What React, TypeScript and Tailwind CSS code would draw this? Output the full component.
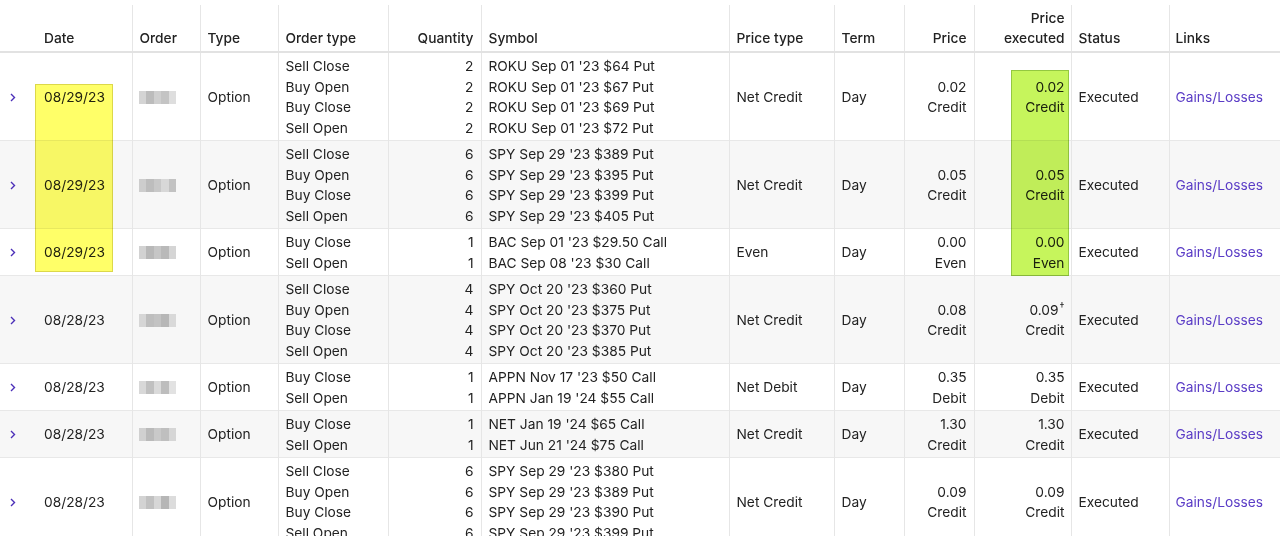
import React from 'react'

type Order = {
  date: string
  legs: { side: string; qty: number; symbol: string }[]
  priceType: string
  price: string
  priceLabel: string
  executed: string
  executedLabel: string
  mark?: boolean
  blur: string[]
}

const legs4 = (qty: number, symbols: string[]) =>
  ['Sell Close', 'Buy Open', 'Buy Close', 'Sell Open'].map((side, i) => ({ side, qty, symbol: symbols[i] }))

const legs2 = (symbols: string[]) =>
  ['Buy Close', 'Sell Open'].map((side, i) => ({ side, qty: 1, symbol: symbols[i] }))

const orders: Order[] = [
  {
    date: '08/29/23',
    legs: legs4(2, ["ROKU Sep 01 '23 $64 Put", "ROKU Sep 01 '23 $67 Put", "ROKU Sep 01 '23 $69 Put", "ROKU Sep 01 '23 $72 Put"]),
    priceType: 'Net Credit',
    price: '0.02',
    priceLabel: 'Credit',
    executed: '0.02',
    executedLabel: 'Credit',
    blur: ['#d4d4d4', '#bcbcbc', '#cfcfcf', '#c4c4c4', '#dedede'],
  },
  {
    date: '08/29/23',
    legs: legs4(6, ["SPY Sep 29 '23 $389 Put", "SPY Sep 29 '23 $395 Put", "SPY Sep 29 '23 $399 Put", "SPY Sep 29 '23 $405 Put"]),
    priceType: 'Net Credit',
    price: '0.05',
    priceLabel: 'Credit',
    executed: '0.05',
    executedLabel: 'Credit',
    blur: ['#cdcdcd', '#bdbdbd', '#c8c8c8', '#d8d8d8', '#c2c2c2'],
  },
  {
    date: '08/29/23',
    legs: legs2(["BAC Sep 01 '23 $29.50 Call", "BAC Sep 08 '23 $30 Call"]),
    priceType: 'Even',
    price: '0.00',
    priceLabel: 'Even',
    executed: '0.00',
    executedLabel: 'Even',
    blur: ['#d2d2d2', '#b8b8b8', '#c6c6c6', '#b9b9b9', '#d5d5d5'],
  },
  {
    date: '08/28/23',
    legs: legs4(4, ["SPY Oct 20 '23 $360 Put", "SPY Oct 20 '23 $375 Put", "SPY Oct 20 '23 $370 Put", "SPY Oct 20 '23 $385 Put"]),
    priceType: 'Net Credit',
    price: '0.08',
    priceLabel: 'Credit',
    executed: '0.09',
    executedLabel: 'Credit',
    mark: true,
    blur: ['#d6d6d6', '#bebebe', '#c3c3c3', '#b7b7b7', '#d9d9d9'],
  },
  {
    date: '08/28/23',
    legs: legs2(["APPN Nov 17 '23 $50 Call", "APPN Jan 19 '24 $55 Call"]),
    priceType: 'Net Debit',
    price: '0.35',
    priceLabel: 'Debit',
    executed: '0.35',
    executedLabel: 'Debit',
    blur: ['#d8d8d8', '#c0c0c0', '#dadada', '#bdbdbd', '#e2e2e2'],
  },
  {
    date: '08/28/23',
    legs: legs2(["NET Jan 19 '24 $65 Call", "NET Jun 21 '24 $75 Call"]),
    priceType: 'Net Credit',
    price: '1.30',
    priceLabel: 'Credit',
    executed: '1.30',
    executedLabel: 'Credit',
    blur: ['#d0d0d0', '#bababa', '#c9c9c9', '#bfbfbf', '#d6d6d6'],
  },
  {
    date: '08/28/23',
    legs: legs4(6, ["SPY Sep 29 '23 $380 Put", "SPY Sep 29 '23 $389 Put", "SPY Sep 29 '23 $390 Put", "SPY Sep 29 '23 $399 Put"]),
    priceType: 'Net Credit',
    price: '0.09',
    priceLabel: 'Credit',
    executed: '0.09',
    executedLabel: 'Credit',
    blur: ['#d3d3d3', '#c1c1c1', '#d7d7d7', '#b6b6b6', '#dcdcdc'],
  },
]

const Chevron = () => (
  <svg width="6" height="9" viewBox="0 0 6 9" fill="none" className="ml-[10px]">
    <path d="M1 1l3.5 3.5L1 8" stroke="#4b2fb8" strokeWidth="1.4" />
  </svg>
)

// pixelated order number, hidden on purpose
const Masked = ({ shades }: { shades: string[] }) => (
  <div className="flex h-[13px] w-[38px] blur-[0.6px]">
    {shades.map((c, i) => (
      <div key={i} className="h-full flex-1" style={{ backgroundColor: c }} />
    ))}
  </div>
)

const th = 'pb-[3px] align-bottom font-medium leading-5 border-b-2 border-b-[#e2e2e2]'
const td = 'pt-[3px] pb-[2px] leading-[20.5px]'
const line = 'border-l border-[#e6e6e6]'

export default function App() {
  return (
    <div
      className="relative h-[536px] w-[1280px] overflow-hidden bg-white pt-[5px] text-[13.75px] text-[#222]"
      style={{ fontFamily: 'Inter, "Liberation Sans", sans-serif' }}
    >
      <table className="w-[1280px] table-fixed border-collapse">
        <colgroup>
          <col className="w-[35px]" />
          <col className="w-[97px]" />
          <col className="w-[68px]" />
          <col className="w-[78px]" />
          <col className="w-[110px]" />
          <col className="w-[93px]" />
          <col className="w-[248px]" />
          <col className="w-[105px]" />
          <col className="w-[70px]" />
          <col className="w-[70px]" />
          <col className="w-[97px]" />
          <col className="w-[98px]" />
          <col className="w-[111px]" />
        </colgroup>
        <thead>
          <tr className="h-[47px] text-left">
            <th className={th}></th>
            <th className={`${th} pl-[9px] pr-[7px]`}>Date</th>
            <th className={`${th} ${line} px-[7px]`}>Order</th>
            <th className={`${th} ${line} px-[7px]`}>Type</th>
            <th className={`${th} ${line} px-[7px]`}>Order type</th>
            <th className={`${th} ${line} px-[7px] text-right`}>Quantity</th>
            <th className={`${th} ${line} px-[7px]`}>Symbol</th>
            <th className={`${th} ${line} px-[7px]`}>Price type</th>
            <th className={`${th} ${line} px-[7px]`}>Term</th>
            <th className={`${th} ${line} px-[7px] text-right`}>Price</th>
            <th className={`${th} ${line} pl-[7px] pr-[6px] text-right`}>
              Price
              <br />
              executed
            </th>
            <th className={`${th} ${line} px-[7px]`}>Status</th>
            <th className={`${th} ${line} px-[6px]`}>Links</th>
          </tr>
        </thead>
        <tbody>
          {orders.map((o, i) => (
            <tr key={i} className={`border-b border-[#e8e8e8] ${i % 2 === 1 ? 'bg-[#f7f7f7]' : 'bg-white'}`}>
              <td className={td}>
                <Chevron />
              </td>
              <td className={`${td} pl-[9px] pr-[7px]`}>{o.date}</td>
              <td className={`${td} ${line} px-[6px]`}>
                <Masked shades={o.blur} />
              </td>
              <td className={`${td} ${line} px-[7px]`}>Option</td>
              <td className={`${td} ${line} px-[7px]`}>
                {o.legs.map((l, j) => (
                  <div key={j}>{l.side}</div>
                ))}
              </td>
              <td className={`${td} ${line} px-[7px] text-right`}>
                {o.legs.map((l, j) => (
                  <div key={j}>{l.qty}</div>
                ))}
              </td>
              <td className={`${td} ${line} px-[7px]`}>
                {o.legs.map((l, j) => (
                  <div key={j}>{l.symbol}</div>
                ))}
              </td>
              <td className={`${td} ${line} px-[7px]`}>{o.priceType}</td>
              <td className={`${td} ${line} px-[7px]`}>Day</td>
              <td className={`${td} ${line} px-[7px] text-right`}>
                <div>{o.price}</div>
                <div>{o.priceLabel}</div>
              </td>
              <td className={`${td} ${line} pl-[7px] pr-[6px] text-right`}>
                <div>
                  {o.executed}
                  {o.mark && <sup className="ml-[1px] text-[10px]">†</sup>}
                </div>
                <div>{o.executedLabel}</div>
              </td>
              <td className={`${td} ${line} px-[7px]`}>Executed</td>
              <td className={`${td} ${line} px-[6px]`}>
                <a href="#" className="text-[#5a3cc6]">
                  Gains/Losses
                </a>
              </td>
            </tr>
          ))}
        </tbody>
      </table>

      {/* highlighter marks laid over the table */}
      <div className="absolute left-[35px] top-[84px] h-[188px] w-[78px] border border-[#dcd84a] bg-[#ffff68] mix-blend-multiply" />
      <div className="absolute left-[1011px] top-[70px] h-[206px] w-[58px] border border-[#94c840] bg-[#c6f55c] mix-blend-multiply" />
    </div>
  )
}
